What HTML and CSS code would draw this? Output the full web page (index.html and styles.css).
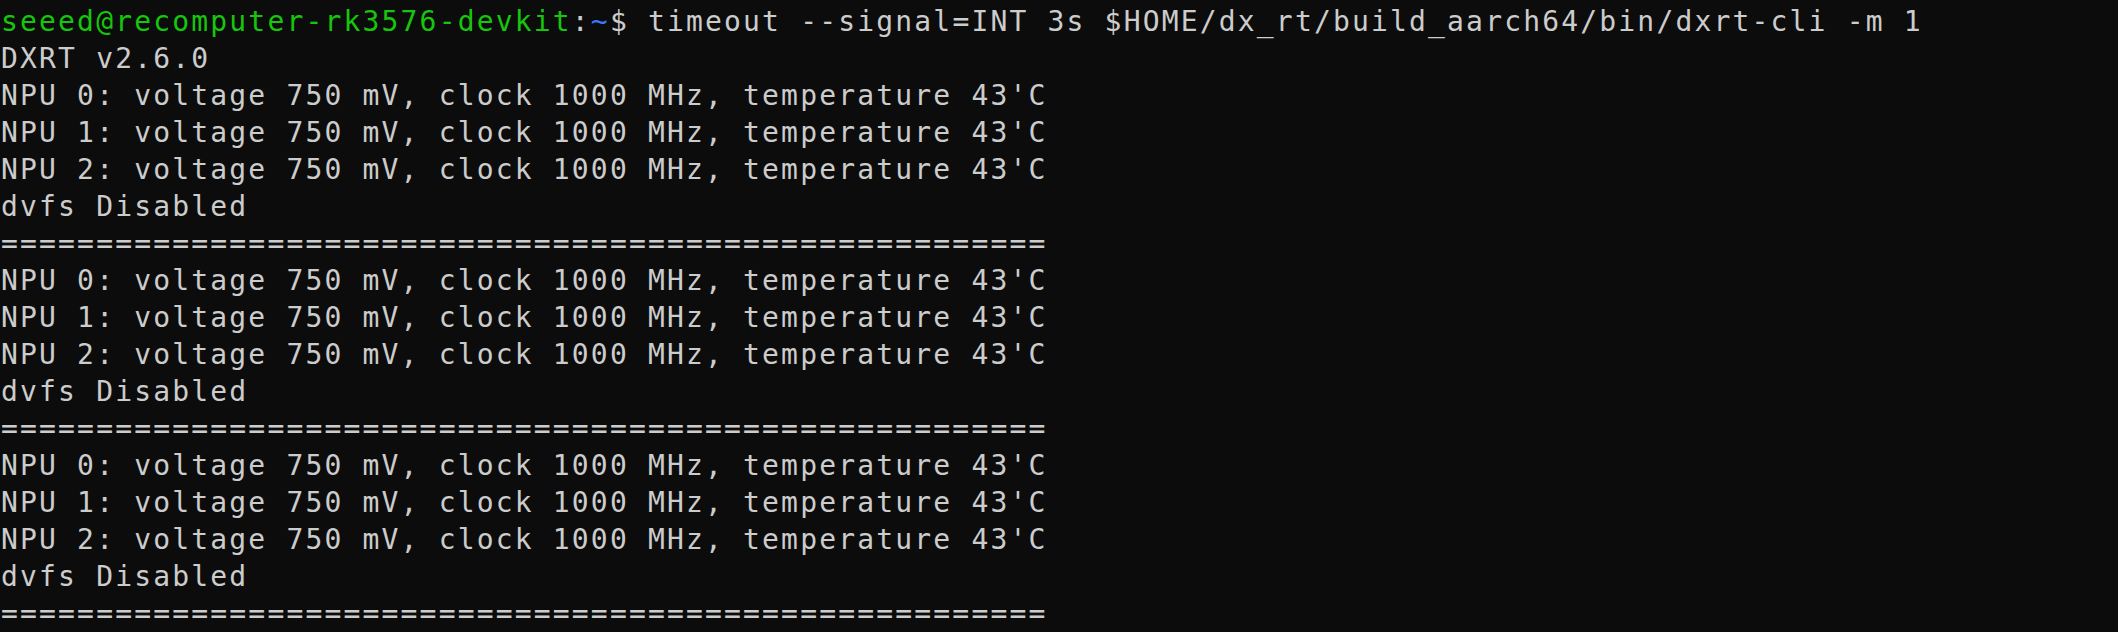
FILE: index.html
```html
<!DOCTYPE html>
<html>
<head>
<meta charset="utf-8">
<link rel="stylesheet" href="styles.css">
</head>
<body>
<pre class="term"><span class="user">seeed@recomputer-rk3576-devkit</span>:<span class="path">~</span>$ timeout --signal=INT 3s $HOME/dx_rt/build_aarch64/bin/dxrt-cli -m 1
DXRT v2.6.0
NPU 0: voltage 750 mV, clock 1000 MHz, temperature 43'C
NPU 1: voltage 750 mV, clock 1000 MHz, temperature 43'C
NPU 2: voltage 750 mV, clock 1000 MHz, temperature 43'C
dvfs Disabled
=======================================================
NPU 0: voltage 750 mV, clock 1000 MHz, temperature 43'C
NPU 1: voltage 750 mV, clock 1000 MHz, temperature 43'C
NPU 2: voltage 750 mV, clock 1000 MHz, temperature 43'C
dvfs Disabled
=======================================================
NPU 0: voltage 750 mV, clock 1000 MHz, temperature 43'C
NPU 1: voltage 750 mV, clock 1000 MHz, temperature 43'C
NPU 2: voltage 750 mV, clock 1000 MHz, temperature 43'C
dvfs Disabled
=======================================================</pre>
</body>
</html>
```
FILE: styles.css
```css
html, body {
  margin: 0;
  padding: 0;
  background: #0c0c0c;
  height: 100%;
  overflow: hidden;
}
.term {
  margin: 0;
  padding: 3px 0 0 1px;
  font-family: "DejaVu Sans Mono", monospace;
  font-size: 28px;
  letter-spacing: 2.17px;
  line-height: 37px;
  color: #cccccc;
  white-space: pre;
}
.user {
  color: #16c60c;
}
.path {
  color: #3b78ff;
}
```
